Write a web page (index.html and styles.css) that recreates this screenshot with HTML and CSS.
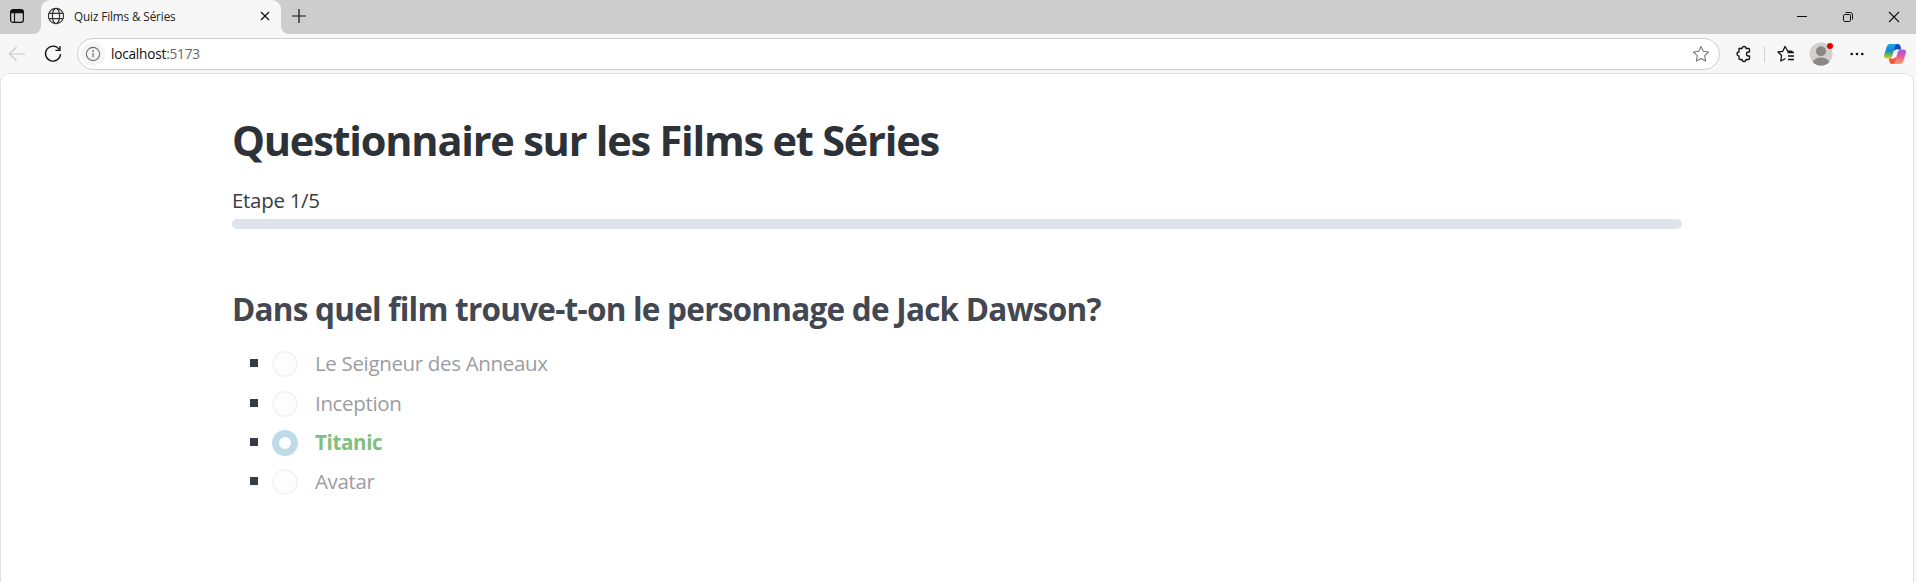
FILE: index.html
```html
<!DOCTYPE html>
<html lang="fr">
<head>
<meta charset="utf-8">
<title>Quiz Films &amp; Séries</title>
<link rel="stylesheet" href="styles.css">
</head>
<body>
<header class="tabstrip">
  <div class="workspaces">
    <svg width="16" height="16" viewBox="0 0 16 16"><rect x="1.6" y="1.6" width="12.8" height="12.8" rx="2.4" fill="none" stroke="#111" stroke-width="1.2"/><path d="M1.5 5.200V3.800Q1.500 1.400 4 1.400h8q2.500 0 2.500 2.400v1.400z" fill="#111"/><path d="M5.500 5v9.500" stroke="#111" stroke-width="1.100"/></svg>
  </div>
  <div class="tab-slot">
    <div class="tab">
      <svg class="globe" width="18" height="18" viewBox="0 0 18 18" fill="none" stroke="#333" stroke-width="1.200"><circle cx="9" cy="9" r="7.600"/><ellipse cx="9" cy="9" rx="3.600" ry="7.600"/><path d="M2 6.300h14M2 11.700h14"/></svg>
      <span class="tab-title">Quiz Films &amp; Séries</span>
      <svg class="tab-close" width="10" height="10" viewBox="0 0 10 10"><path d="M1 1l8 8M9 1l-8 8" stroke="#111" stroke-width="1.300"/></svg>
    </div>
  </div>
  <div class="strip-rest">
    <svg class="new-tab" width="16" height="16" viewBox="0 0 16 16"><path d="M8 1v14M1 8h14" stroke="#111" stroke-width="1.200"/></svg>
    <div class="window-buttons">
      <svg width="12" height="12" viewBox="0 0 12 12"><path d="M1 5.500h10" stroke="#111"/></svg>
      <svg width="12" height="12" viewBox="0 0 12 12" fill="none" stroke="#111"><rect x="1.500" y="3.500" width="7" height="7" rx="1.300"/><path d="M3.500 1.500h4.500q2.500 0 2.500 2.500v4.500"/></svg>
      <svg width="12" height="12" viewBox="0 0 12 12"><path d="M1 1l10 10M11 1L1 11" stroke="#111" stroke-width="1.100"/></svg>
    </div>
  </div>
</header>
<nav class="toolbar">
  <svg class="back" width="18" height="16" viewBox="0 0 18 16" fill="none" stroke="#c8c8c8" stroke-width="1.100"><path d="M17 8H2M8.500 1L1.500 8l7 7"/></svg>
  <svg class="reload" width="18" height="18" viewBox="0 0 18 18" fill="none" stroke="#111" stroke-width="1.300"><path d="M15.300 4.500A7.500 7.500 0 1 0 16.500 9M16 1v4.400h-4.500"/></svg>
  <div class="address">
    <span class="site-info"><svg width="16" height="16" viewBox="0 0 16 16"><circle cx="8" cy="8" r="6.600" fill="none" stroke="#707070" stroke-width="1.100"/><path d="M8 7v4.200" stroke="#707070" stroke-width="1.200"/><circle cx="8" cy="5" r=".9" fill="#707070"/></svg></span>
    <span class="url">localhost<span class="port">:5173</span></span>
    <svg class="star" width="18" height="18" viewBox="0 0 18 18" fill="none" stroke="#777" stroke-width="1.100" stroke-linejoin="round"><path d="M9 1.500l2.300 4.800 5.200.7-3.800 3.600.9 5.300L9 13.400l-4.600 2.500.9-5.300L1.500 7l5.200-.7z"/></svg>
  </div>
  <svg class="extensions" width="18" height="18" viewBox="0 0 18 18" fill="none" stroke="#111" stroke-width="1.300" stroke-linejoin="round"><path d="M4 3.500h3a2 2 0 0 1 4 0h2.500q1 0 1 1V7H13.500a2 2 0 0 0 0 4h1v2.500q0 1-1 1H11a2 2 0 0 1-4 0H5q-1 0-1-1V11a2 2 0 0 1 0-4z"/></svg>
  <span class="divider"></span>
  <svg class="favorites" width="18" height="18" viewBox="0 0 18 18" fill="none" stroke="#111" stroke-width="1.300" stroke-linejoin="round"><path d="M15.500 6.500l-4.800-.5L8 1.500 5.800 6.300 1 7l3.600 3.500-.8 5.500 4.600-2.500M10.500 7.500h6.500M11 11h6M11 14.500h6"/></svg>
  <div class="profile">
    <svg width="24" height="24" viewBox="0 0 24 24"><defs><clipPath id="face"><circle cx="12" cy="12" r="11.500"/></clipPath></defs><circle cx="12" cy="12" r="11.500" fill="#d2d0ce"/><g clip-path="url(#face)" fill="#8a8886"><circle cx="12" cy="9.300" r="5"/><ellipse cx="12" cy="20.500" rx="8" ry="5"/></g></svg>
    <i class="alert-dot"></i>
  </div>
  <svg class="more" width="14" height="4" viewBox="0 0 14 4" fill="#111"><circle cx="1.700" cy="2" r="1.300"/><circle cx="7" cy="2" r="1.300"/><circle cx="12.300" cy="2" r="1.300"/></svg>
  <svg class="copilot" width="22" height="20" viewBox="0 0 22 20">
    <defs>
      <linearGradient id="cool" x1="0" y1="0" x2="0" y2="1"><stop offset="0" stop-color="#18a7ee"/><stop offset=".45" stop-color="#1488cf"/><stop offset=".7" stop-color="#54b567"/><stop offset="1" stop-color="#f2c400"/></linearGradient>
      <linearGradient id="warm" x1="0" y1="0" x2="0" y2="1"><stop offset="0" stop-color="#9a55ee"/><stop offset=".5" stop-color="#e95a9b"/><stop offset="1" stop-color="#ffa45c"/></linearGradient>
    </defs>
    <path d="M8 0h6q2 0 2.600 2.500l.7 3H14q-2 0-2.600 2L10 6z" fill="#1549b8"/>
    <path d="M14 20H8q-2 0-2.600-2.500l-.7-3H8q2 0 2.600-2L12 14z" fill="#f3543f"/>
    <path d="M6 0h7q-1.400.3-2 2.500L8.300 12Q7.500 14.500 5 14.500H3Q-.8 14.500.3 10.500L2.600 3Q3.500 0 6 0z" fill="url(#cool)"/>
    <path d="M16 20H9q1.400-.3 2-2.500L13.700 8Q14.500 5.500 17 5.500h2q3.800 0 2.700 4L19.400 17q-.9 3-3.400 3z" fill="url(#warm)"/>
    <path d="M11.800 5.500H14q-1.200.8-1.700 2.500l-1.600 5.500q-.3 1-1 1H8q1-.8 1.500-2.500l1.400-5q.3-1.200.9-1.500z" fill="#fff"/>
  </svg>
</nav>
<main class="page">
  <div class="container">
    <h1 class="title">Questionnaire sur les Films et Séries</h1>
    <p class="step">Etape 1/5</p>
    <div class="progress"></div>
    <h2 class="question">Dans quel film trouve-t-on le personnage de Jack Dawson?</h2>
    <ul class="answers">
      <li class="answer"><span class="radio"></span><span class="label">Le Seigneur des Anneaux</span></li>
      <li class="answer"><span class="radio"></span><span class="label">Inception</span></li>
      <li class="answer"><span class="radio checked"></span><span class="label correct">Titanic</span></li>
      <li class="answer"><span class="radio"></span><span class="label">Avatar</span></li>
    </ul>
  </div>
</main>
</body>
</html>
```
FILE: styles.css
```css
* { box-sizing: border-box; }
body {
  margin: 0;
  height: 582px;
  overflow: hidden;
  display: flex;
  flex-direction: column;
  background: #f7f7f7;
  font-family: "Open Sans", "Noto Sans", sans-serif;
}
svg { display: block; flex: none; }

.tabstrip { display: flex; height: 34px; flex: none; }
.workspaces {
  width: 41px;
  padding: 8px 0 0 9px;
  border-bottom-right-radius: 8px;
  background: #cdcdcd;
}
.tab-slot { width: 240px; background: linear-gradient(#cdcdcd 0 0) 0 0 / 100% 12px no-repeat; }
.tab {
  display: flex;
  align-items: center;
  height: 34px;
  padding: 0 11px 2px 6px;
  border-radius: 9px 9px 0 0;
  background: #f7f7f7;
}
.tab-title { margin-left: 9px; font-size: 11.7px; letter-spacing: -0.1px; color: #222; white-space: nowrap; }
.tab-close { margin-left: auto; }
.strip-rest { display: flex; flex: 1; border-bottom-left-radius: 8px; background: #cdcdcd; }
.new-tab { margin: 8px 0 0 10px; }
.window-buttons { display: flex; gap: 34px; margin: 11px 16px 0 auto; }

.toolbar { display: flex; align-items: center; height: 39px; flex: none; padding: 0 10px 0 8px; }
.reload { margin-left: 18px; }
.address {
  display: flex;
  align-items: center;
  width: 1643px;
  height: 32px;
  margin-left: 15px;
  padding: 0 9px 0 3px;
  border: 1px solid #cecece;
  border-radius: 16px;
  background: #fff;
}
.site-info { display: grid; place-items: center; width: 24px; height: 24px; border-radius: 50%; background: #f5f5f5; }
.url { margin-left: 6px; font-size: 13.6px; letter-spacing: -0.2px; color: #111; }
.port { color: #666; }
.star { margin-left: auto; }
.extensions { margin-left: 15px; }
.divider { width: 1px; height: 16px; margin: 0 12px 0 11px; background: #cfcfcf; }
.profile { position: relative; margin-left: 14px; }
.alert-dot { position: absolute; right: 0; top: 1px; width: 6px; height: 6px; border-radius: 50%; background: #e50000; }
.more { margin-left: 17px; }
.copilot { margin-left: auto; }

.page {
  flex: 1;
  margin-right: 2px;
  border: 1px solid #e2e2e2;
  border-bottom: 0;
  border-radius: 9px 9px 0 0;
  background: #fff;
}
.container { width: 1450px; margin-left: 231px; padding-top: 42px; }
.title { margin: 0; font-size: 41.5px; line-height: 48px; font-weight: 700; letter-spacing: -1.22px; color: #2d3138; white-space: nowrap; }
.step { margin: 20px 0 0; font-size: 20.5px; line-height: 32px; letter-spacing: -0.3px; color: #373c44; }
.progress { height: 10px; margin-top: 3px; border-radius: 5px; background: #dfe3eb; }
.question { margin: 60px 0 0; font-size: 31.5px; line-height: 40px; font-weight: 700; letter-spacing: -0.76px; color: #424751; white-space: nowrap; }
.answers { margin: 14px 0 0; padding: 0 0 0 18px; list-style: none; }
.answer { display: flex; align-items: center; height: 39.4px; font-size: 20.5px; letter-spacing: -0.34px; color: #9b9da2; }
.answer::before { content: ""; width: 8px; height: 8px; margin: 1px 14px 0 0; background: #373c44; }
.radio { width: 26px; height: 26px; margin: 3px 17px 0 0; border: 2px solid #f3f4f9; border-radius: 50%; background: #fdfdfd; }
.radio.checked { border: 7px solid #bfdbea; background: #fff; }
.label { padding-top: 1px; }
.correct { font-weight: 700; color: #80c080; }
```
